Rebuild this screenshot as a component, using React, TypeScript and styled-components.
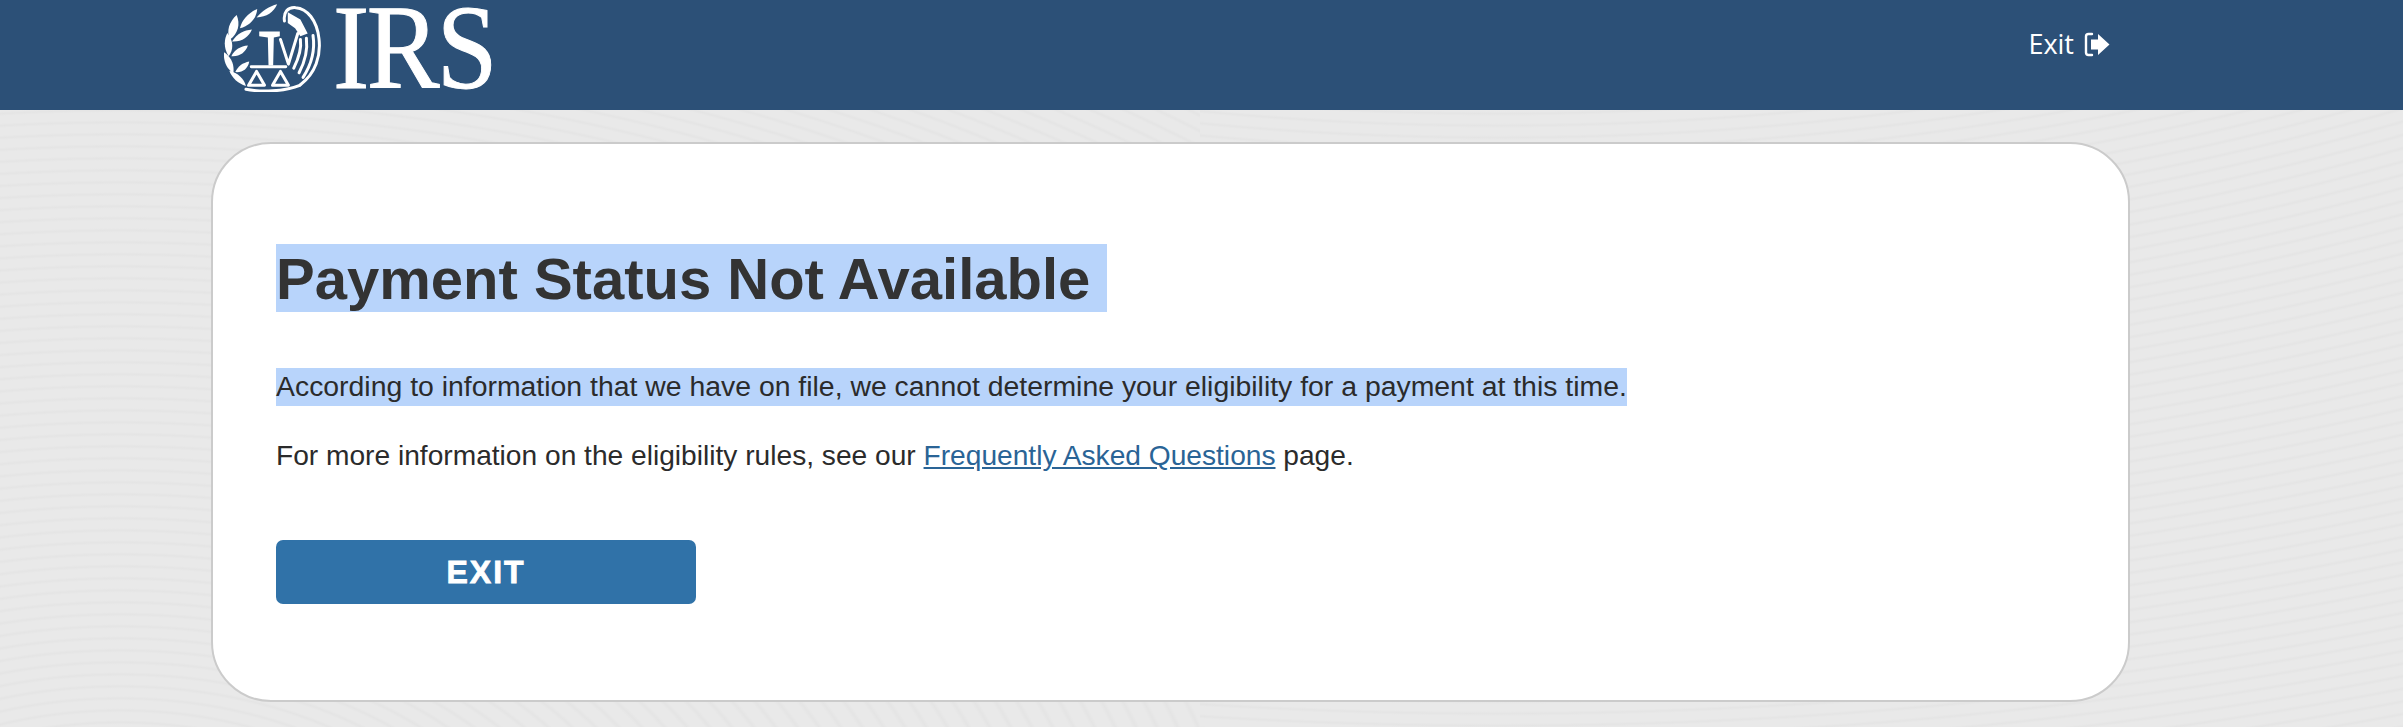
import styled, { createGlobalStyle } from "styled-components";

const GlobalStyle = createGlobalStyle`
  html, body {
    margin: 0;
    padding: 0;
    height: 727px;
    overflow: hidden;
    font-family: "Liberation Sans", Arial, sans-serif;
  }
`;

const Page = styled.div`
  width: 2403px;
  height: 727px;
  overflow: hidden;
  background-color: #e9e9e9;
  background-repeat: no-repeat;
  background-size: 1200px 727px, 1203px 727px;
  background-position: left top, right top;
  background-image:
    repeating-radial-gradient(
      ellipse 1500px 900px at 120px 900px,
      transparent 0,
      transparent 12px,
      rgba(0, 0, 0, 0.02) 16px,
      transparent 20px
    ),
    repeating-radial-gradient(
      ellipse 1500px 900px at 300px -1000px,
      transparent 0,
      transparent 12px,
      rgba(0, 0, 0, 0.02) 16px,
      transparent 20px
    );
`;

const TopBar = styled.header`
  height: 110px;
  background: #2c5077;
  display: flex;
  align-items: center;
  justify-content: space-between;
  padding: 0 293px 0 224px;
  box-sizing: border-box;
`;

const Logo = styled.div`
  display: flex;
  align-items: center;
  gap: 11px;
  color: #fff;
  margin-top: -14px;
`;

const Wordmark = styled.span`
  display: block;
  width: 160px;
  font-family: "Liberation Serif", "Times New Roman", serif;
  font-size: 120px;
  line-height: 88px;
  letter-spacing: -3px;
  -webkit-text-stroke: 1px #fff;
  transform: scaleX(0.91);
  transform-origin: left center;
`;

const ExitLink = styled.a`
  display: flex;
  align-items: center;
  gap: 10px;
  color: #fff;
  font-family: "Open Sans", sans-serif;
  font-size: 27px;
  font-weight: 500;
  line-height: 30px;
  margin-top: -22px;
  text-decoration: none;
`;

const Main = styled.main`
  padding: 32px 273px 0 211px;
`;

const Card = styled.section`
  box-sizing: border-box;
  height: 560px;
  background: #fff;
  border: 2px solid #cbcbcb;
  border-radius: 60px;
  padding: 100px 63px 0;
`;

const TitleMark = styled.span`
  display: inline-block;
  height: 68px;
  background: #b8d4fb;
`;

const LineMark = styled.span`
  display: inline-block;
  padding-bottom: 2px;
  background: #b8d4fb;
`;

const Title = styled.h1`
  margin: 0;
  height: 68px;
  font-size: 58px;
  font-weight: 700;
  line-height: 70px;
  color: #333;
`;

const Paragraph = styled.p<{ $gap: number; $size: number }>`
  margin: ${({ $gap }) => $gap}px 0 0;
  height: 38px;
  font-size: ${({ $size }) => $size}px;
  line-height: 36px;
  color: #2b2b2b;
`;

const FaqLink = styled.a`
  color: #2a6496;
  text-decoration: underline;
`;

const ExitButton = styled.button`
  display: block;
  width: 420px;
  height: 64px;
  margin-top: 64px;
  border: 0;
  border-radius: 7px;
  background: #3072a8;
  color: #fff;
  font-family: "Liberation Sans", Arial, sans-serif;
  font-size: 32px;
  font-weight: 700;
  letter-spacing: 2px;
  -webkit-text-stroke: 0.8px #fff;
`;

const Seal = () => (
  <svg width="98" height="88" viewBox="70 15 295 265" fill="none">
    <g fill="#fff">
      <path d="M168 56C186 34 206 22 230 16C220 40 198 54 168 56Z" />
      <path d="M118 88C124 62 144 42 170 30C168 58 148 80 118 88Z" />
      <path d="M88 122C76 96 86 68 108 48C120 76 112 104 88 122Z" />
      <path d="M94 128C110 104 130 94 154 92C144 116 122 130 94 128Z" />
      <path d="M84 172C68 148 70 122 80 102C98 124 100 152 84 172Z" />
      <path d="M92 172C102 152 120 142 142 140C134 162 116 174 92 172Z" />
      <path d="M98 224C76 208 68 186 70 160C92 174 102 198 98 224Z" />
      <path d="M104 220C112 202 126 192 146 188C142 210 126 222 104 220Z" />
      <path d="M136 262C112 254 94 238 86 216C112 222 130 240 136 262Z" />
      <path d="M176 98H238V112L220 116L218 200H204L202 116L176 112Z" />
      <path d="M262 40L300 62L322 104L300 112L284 88L262 72Z" />
    </g>
    <g stroke="#fff" strokeWidth="9" strokeLinejoin="round" strokeLinecap="round">
      <path d="M168 218L144 260H192Z" />
      <path d="M240 218L216 260H264Z" />
      <path d="M136 272C180 280 250 280 298 260" />
      <path d="M152 204H256" />
      <path d="M252 66C248 40 262 24 286 26C320 28 350 64 356 120C362 170 346 224 300 258" />
      <path d="M292 104L264 196L240 122" />
      <path d="M338 110C344 150 334 196 308 236" />
      <path d="M318 118C322 150 316 184 296 222" />
      <path d="M300 122C304 150 296 176 280 208" />
    </g>
  </svg>
);

const ExitIcon = () => (
  <svg width="26" height="25" viewBox="0 0 26 25" fill="none">
    <path
      d="M8 2H4.5C2.8 2 2 3 2 4.5V20.5C2 22 2.8 23 4.5 23H8"
      stroke="#fff"
      strokeWidth="2.4"
      strokeLinecap="round"
    />
    <path d="M7 7.5H14V2L25.5 12.5L14 23V17.5H7Z" fill="#fff" />
  </svg>
);

export default function App() {
  return (
    <Page>
      <GlobalStyle />
      <TopBar>
        <Logo>
          <Seal />
          <Wordmark>IRS</Wordmark>
        </Logo>
        <ExitLink href="#">
          Exit
          <ExitIcon />
        </ExitLink>
      </TopBar>
      <Main>
        <Card>
          <Title>
            <TitleMark>Payment Status Not Available&nbsp;</TitleMark>
          </Title>
          <Paragraph $gap={56} $size={28.4}>
            <LineMark>
              According to information that we have on file, we cannot determine
              your eligibility for a payment at this time.
            </LineMark>
          </Paragraph>
          <Paragraph $gap={32} $size={28.15}>
            For more information on the eligibility rules, see our{" "}
            <FaqLink href="#">Frequently Asked Questions</FaqLink> page.
          </Paragraph>
          <ExitButton>EXIT</ExitButton>
        </Card>
      </Main>
    </Page>
  );
}
